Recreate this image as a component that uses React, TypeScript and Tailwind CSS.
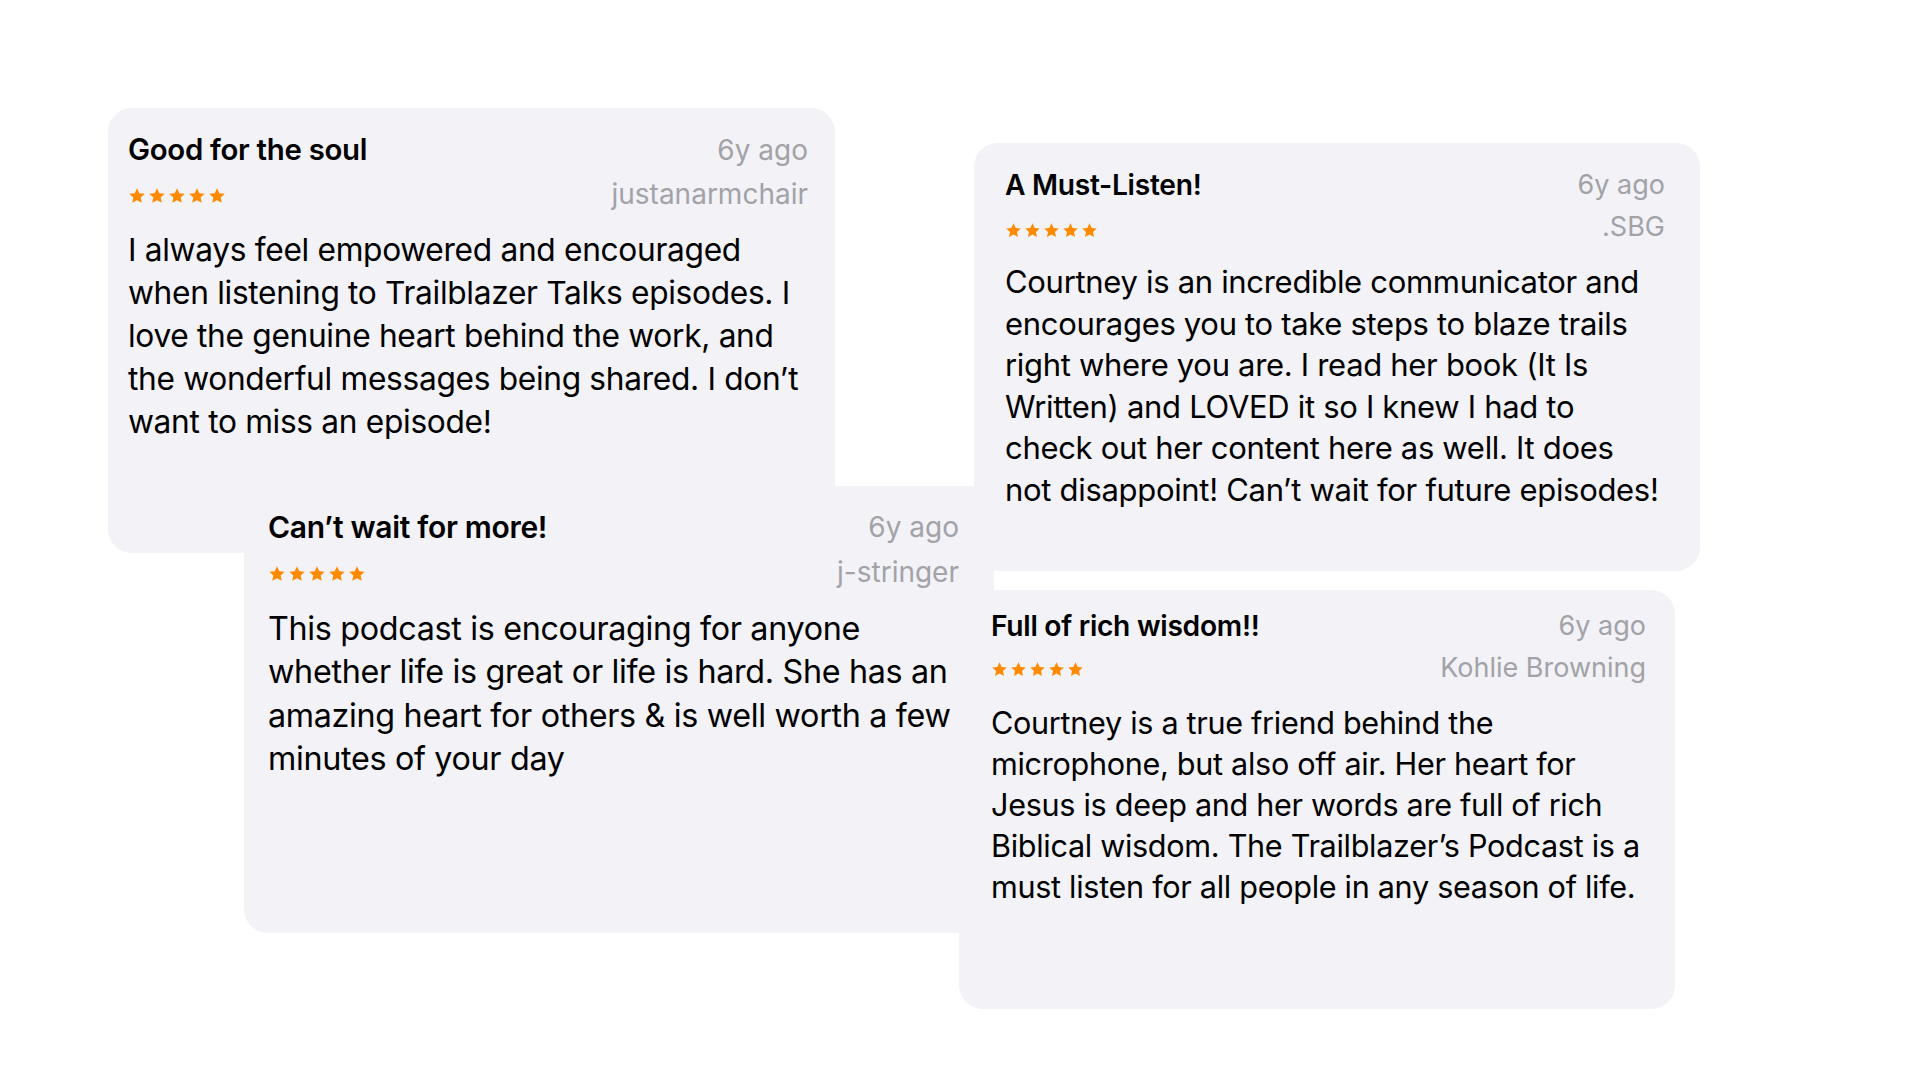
const STAR = 'M12 1.8l3.05 6.55 7.15.8-5.3 4.9 1.45 7.05L12 17.5l-6.35 3.6 1.45-7.05-5.3-4.9 7.15-.8z'

type Review = {
  title: string
  author: string
  lines: string[]
  box: string
  pad: string
  title_: string
  meta: string
  row: string
  stars: string
  body: string
  star: number
}

const reviews: Review[] = [
  {
    title: 'Good for the soul',
    author: 'justanarmchair',
    lines: [
      'I always feel empowered and encouraged',
      'when listening to Trailblazer Talks episodes. I',
      'love the genuine heart behind the work, and',
      'the wonderful messages being shared. I don’t',
      'want to miss an episode!',
    ],
    box: 'left-[108px] top-[108px] w-[727px] h-[445px] z-0',
    pad: 'pl-[20px] pr-[27px] pt-[24px]',
    title_: 'text-[29.4px] leading-[36px]',
    meta: 'text-[28px] leading-[36px]',
    row: 'mt-[8px]',
    stars: 'translate-y-[2px]',
    body: 'mt-[16px] text-[31.7px] leading-[43px]',
    star: 18,
  },
  {
    title: 'Can’t wait for more!',
    author: 'j-stringer',
    lines: [
      'This podcast is encouraging for anyone',
      'whether life is great or life is hard. She has an',
      'amazing heart for others & is well worth a few',
      'minutes of your day',
    ],
    box: 'left-[244px] top-[486px] w-[750px] h-[447px] z-10',
    pad: 'pl-[24px] pr-[35px] pt-[23px]',
    title_: 'text-[30px] leading-[36px]',
    meta: 'text-[28px] leading-[36px]',
    row: 'mt-[9px]',
    stars: 'translate-y-[2px]',
    body: 'mt-[17px] text-[32.3px] leading-[43.3px]',
    star: 18,
  },
  {
    title: 'A Must-Listen!',
    author: '.SBG',
    lines: [
      'Courtney is an incredible communicator and',
      'encourages you to take steps to blaze trails',
      'right where you are. I read her book (It Is',
      'Written) and LOVED it so I knew I had to',
      'check out her content here as well. It does',
      'not disappoint! Can’t wait for future episodes!',
    ],
    box: 'left-[974px] top-[143px] w-[726px] h-[428px] z-20',
    pad: 'pl-[31px] pr-[35px] pt-[24px]',
    title_: 'text-[28.2px] leading-[36px]',
    meta: 'text-[27px] leading-[36px]',
    row: 'mt-[6px]',
    stars: 'translate-y-[3px]',
    body: 'mt-[16px] text-[31px] leading-[41.6px]',
    star: 17,
  },
  {
    title: 'Full of rich wisdom!!',
    author: 'Kohlie Browning',
    lines: [
      'Courtney is a true friend behind the',
      'microphone, but also off air. Her heart for',
      'Jesus is deep and her words are full of rich',
      'Biblical wisdom. The Trailblazer’s Podcast is a',
      'must listen for all people in any season of life.',
    ],
    box: 'left-[959px] top-[590px] w-[716px] h-[419px] z-30',
    pad: 'pl-[32px] pr-[29px] pt-[18px]',
    title_: 'text-[28.2px] leading-[36px]',
    meta: 'text-[27px] leading-[36px]',
    row: 'mt-[6px]',
    stars: 'translate-y-[1px]',
    body: 'mt-[16px] text-[30.6px] leading-[41px]',
    star: 17,
  },
]

function Stars({ size, cls }: { size: number; cls: string }) {
  return (
    <div className={`flex gap-[2px] ${cls}`}>
      {[0, 1, 2, 3, 4].map((i) => (
        <svg key={i} width={size} height={size} viewBox="0 0 24 24">
          <path d={STAR} fill="#ff8a00" />
        </svg>
      ))}
    </div>
  )
}

function ReviewCard({ r }: { r: Review }) {
  return (
    <div className={`absolute rounded-[24px] bg-[#f2f2f7] ${r.box} ${r.pad}`}>
      <div className="flex items-center justify-between">
        <div className={`font-semibold text-black tracking-[-0.01em] ${r.title_}`}>{r.title}</div>
        <div className={`text-[#a2a2a7] ${r.meta}`}>6y ago</div>
      </div>
      <div className={`flex items-center justify-between ${r.row}`}>
        <Stars size={r.star} cls={r.stars} />
        <div className={`text-[#a2a2a7] ${r.meta}`}>{r.author}</div>
      </div>
      <div className={`text-black tracking-[-0.01em] ${r.body}`}>
        {r.lines.map((l, i) => (
          <div key={i} className="whitespace-nowrap">
            {l}
          </div>
        ))}
      </div>
    </div>
  )
}

export default function App() {
  return (
    <div className="relative w-[1920px] h-[1080px] overflow-hidden bg-white font-[family-name:Inter,'Liberation_Sans',sans-serif]">
      {reviews.map((r) => (
        <ReviewCard key={r.title} r={r} />
      ))}
    </div>
  )
}
